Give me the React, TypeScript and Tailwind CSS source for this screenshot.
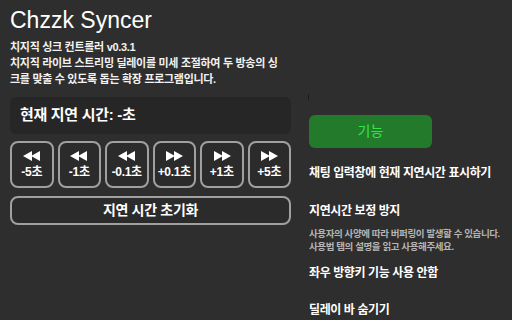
import React from "react";

const FONT = { fontFamily: '"Liberation Sans", "Noto Sans CJK KR", sans-serif' };

function Rewind({ dir }: { dir: "back" | "fwd" }) {
  return (
    <svg width="18" height="10" viewBox="0 0 18 10" className="block">
      {dir === "back" ? (
        <g fill="#ffffff">
          <polygon points="0,5 9,0 9,10" />
          <polygon points="8,5 17,0 17,10" />
        </g>
      ) : (
        <g fill="#ffffff">
          <polygon points="1,0 10,5 1,10" />
          <polygon points="9,0 18,5 9,10" />
        </g>
      )}
    </svg>
  );
}

const buttons: { label: string; dir: "back" | "fwd" }[] = [
  { label: "-5초", dir: "back" },
  { label: "-1초", dir: "back" },
  { label: "-0.1초", dir: "back" },
  { label: "+0.1초", dir: "fwd" },
  { label: "+1초", dir: "fwd" },
  { label: "+5초", dir: "fwd" },
];

export default function App() {
  return (
    <div
      className="w-[512px] h-[320px] overflow-hidden bg-[#2e2e2e] text-[#f2f2f2] flex gap-[18px] px-[10px]"
      style={FONT}
    >
      <div className="w-[281px] shrink-0 flex flex-col pt-[7px]">
        <h1 className="text-[23px] leading-[26px] font-normal text-white">Chzzk Syncer</h1>
        <div className="mt-[6px] text-[11px] leading-[16px] font-bold tracking-[-0.3px]">
          <div>치지직 싱크 컨트롤러 v0.3.1</div>
          <div>치지직 라이브 스트리밍 딜레이를 미세 조절하여 두 방송의 싱</div>
          <div>크를 맞출 수 있도록 돕는 확장 프로그램입니다.</div>
        </div>
        <div className="mt-[10px] h-[37px] shrink-0 rounded-[6px] bg-[#262626] flex items-center px-[10px]">
          <span className="text-[15px] font-bold tracking-[-0.3px] text-white">현재 지연 시간: -초</span>
        </div>
        <div className="mt-[7px] grid grid-cols-6 gap-[4px]">
          {buttons.map((b) => (
            <button
              key={b.label}
              className="h-[47px] rounded-[8px] border-2 border-[#a0a0a0] bg-[#2b2b2b] flex flex-col items-center justify-center gap-[4px] text-white"
              style={FONT}
            >
              <Rewind dir={b.dir} />
              <span className="text-[12px] leading-[14px] font-bold tracking-[-0.3px]">{b.label}</span>
            </button>
          ))}
        </div>
        <button
          className="mt-[8px] h-[29px] shrink-0 rounded-[8px] border-2 border-[#a0a0a0] bg-[#2b2b2b] flex items-center justify-center text-white text-[14px] font-bold tracking-[-0.3px]"
          style={FONT}
        >
          지연 시간 초기화
        </button>
      </div>
      <div className="flex-1 min-w-0 flex flex-col pt-[94px] font-bold whitespace-nowrap">
        <div className="w-px h-[6px] shrink-0 bg-[#1c1c1c] -ml-px" />
        <button
          className="mt-[15px] w-[123px] h-[33px] shrink-0 rounded-[6px] bg-[#237a2b] text-[#2ee84a] text-[14px] font-normal flex items-center justify-center"
          style={FONT}
        >
          기능
        </button>
        <div className="mt-[18px] shrink-0 text-[12px] leading-[14px] tracking-[-0.4px] text-white">
          채팅 입력창에 현재 지연시간 표시하기
        </div>
        <div className="mt-[24px] shrink-0 text-[12px] leading-[14px] tracking-[-0.4px] text-white">
          지연시간 보정 방지
        </div>
        <div className="mt-[9px] shrink-0 text-[9.5px] leading-[13px] tracking-[-0.4px] text-[#b5b5b5]">
          <div>사용자의 사양에 따라 버퍼링이 발생할 수 있습니다.</div>
          <div>사용법 탭의 설명을 읽고 사용해주세요.</div>
        </div>
        <div className="mt-[13px] shrink-0 text-[12px] leading-[14px] tracking-[-0.4px] text-white">
          좌우 방향키 기능 사용 안함
        </div>
        <div className="mt-[23px] shrink-0 text-[12px] leading-[14px] tracking-[-0.4px] text-white">
          딜레이 바 숨기기
        </div>
      </div>
    </div>
  );
}
